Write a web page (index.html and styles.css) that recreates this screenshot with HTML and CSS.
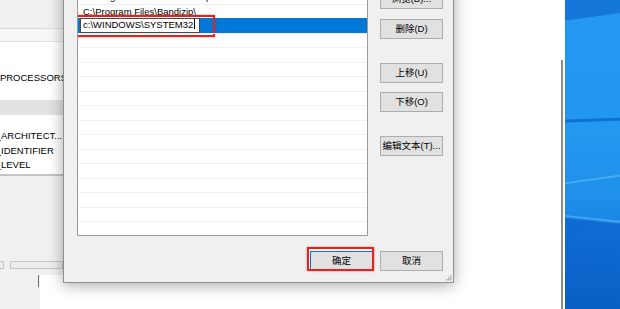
FILE: index.html
```html
<!DOCTYPE html>
<html lang="zh-CN">
<head>
    <meta charset="UTF-8">
    <meta name="viewport" content="width=device-width, initial-scale=1.0">
    <title>编辑环境变量</title>
    <link rel="stylesheet" href="styles.css">
</head>
<body>
    <div class="desk">
        <div class="wallpaper"></div>

        <div class="explorer">
            <div class="scroll-thumb"></div>
        </div>

        <div class="sysprop">
            <div class="sysprop-edge"></div>
        </div>

        <!-- environment variables window, mostly hidden behind the editor -->
        <div class="envwin">
            <div class="env-list">
                <div class="env-head"></div>
                <div class="env-row"><span class="env-name">ComSpec</span></div>
                <div class="env-row"><span class="env-name">DriverData</span></div>
                <div class="env-row"><span class="env-name">NUMBER_OF_PROCESSORS</span></div>
                <div class="env-row"><span class="env-name">OS</span></div>
                <div class="env-row selected"><span class="env-name">Path</span></div>
                <div class="env-row"><span class="env-name">PATHEXT</span></div>
                <div class="env-row"><span class="env-name">PROCESSOR_ARCHITECT...</span></div>
                <div class="env-row"><span class="env-name">PROCESSOR_IDENTIFIER</span></div>
                <div class="env-row"><span class="env-name">PROCESSOR_LEVEL</span></div>
            </div>
            <div class="env-btns">
                <div class="env-btn"></div>
                <div class="env-btn"></div>
            </div>
        </div>

        <!-- edit environment variable dialog -->
        <div class="dialog">
            <div class="dlg-body">
                <div class="path-list">
                    <div class="path-row">%SystemRoot%\system32</div>
                    <div class="path-row">%SystemRoot%</div>
                    <div class="path-row">%SystemRoot%\System32\Wbem</div>
                    <div class="path-row">%SYSTEMROOT%\System32\WindowsPowerShell\v1.0\</div>
                    <div class="path-row">C:\Program Files\NVIDIA Corporation\NVIDIA NvDLISR</div>
                    <div class="path-row">C:\Program Files\Bandizip\</div>
                    <div class="path-row editing">
                        <span class="edit-box">c:\WINDOWS\SYSTEM32<i class="caret"></i></span>
                        <span class="mark mark-edit"></span>
                    </div>
                    <div class="path-row"></div>
                    <div class="path-row"></div>
                    <div class="path-row"></div>
                    <div class="path-row"></div>
                    <div class="path-row"></div>
                    <div class="path-row"></div>
                    <div class="path-row"></div>
                    <div class="path-row"></div>
                    <div class="path-row"></div>
                    <div class="path-row"></div>
                    <div class="path-row"></div>
                    <div class="path-row"></div>
                    <div class="path-row"></div>
                    <div class="path-row"></div>
                    <div class="path-row"></div>
                </div>
                <div class="side-btns">
                    <button class="btn">新建(N)</button>
                    <button class="btn">编辑(E)</button>
                    <button class="btn">浏览(B)...</button>
                    <button class="btn">删除(D)</button>
                    <button class="btn sep">上移(U)</button>
                    <button class="btn near">下移(O)</button>
                    <button class="btn sep">编辑文本(T)...</button>
                </div>
            </div>
            <div class="dlg-foot">
                <button class="btn default">确定<span class="mark mark-ok"></span></button>
                <button class="btn">取消</button>
            </div>
            <svg class="grip" width="7" height="7" viewBox="0 0 7 7">
                <rect x="5" y="1" width="1.5" height="1.5" fill="#a8a8a8"/>
                <rect x="3" y="3" width="1.5" height="1.5" fill="#a8a8a8"/>
                <rect x="5" y="3" width="1.5" height="1.5" fill="#a8a8a8"/>
                <rect x="1" y="5" width="1.5" height="1.5" fill="#a8a8a8"/>
                <rect x="3" y="5" width="1.5" height="1.5" fill="#a8a8a8"/>
                <rect x="5" y="5" width="1.5" height="1.5" fill="#a8a8a8"/>
            </svg>
        </div>
    </div>
</body>
</html>
```

FILE: styles.css
```css
body {
    margin: 0;
    background: #fff;
    font-family: "Liberation Sans", "Noto Sans CJK SC", sans-serif;
    font-size: 9.5px;
    color: #000;
}

.desk {
    position: relative;
    width: 620px;
    height: 309px;
    overflow: hidden;
}

/* windows desktop wallpaper on the right */
.wallpaper {
    position: absolute;
    left: 565px;
    top: 0;
    width: 55px;
    height: 309px;
    background:
        linear-gradient(172deg, #1677da 0 20px, transparent 21px),
        linear-gradient(178deg, transparent 0 119px, #0f6fd5 120px 122px, transparent 123px),
        linear-gradient(172deg, transparent 0 180px, #45aaf6 181px 182px, transparent 183px),
        linear-gradient(186deg, transparent 0 219px, #3fa4f2 220px 221px, #0f6cd3 223px, #0a5fc5 309px),
        linear-gradient(180deg, #2399f1 0, #2196ef 110px, #2399f0 130px, #1f8fea 200px, #1b87e6 220px);
}

.explorer {
    position: absolute;
    left: 300px;
    top: 0;
    width: 265px;
    height: 309px;
    background: #fff;
}

.scroll-thumb {
    position: absolute;
    right: 2px;
    top: 60px;
    width: 2px;
    height: 260px;
    background: #8c8c8c;
}

.sysprop {
    position: absolute;
    left: -100px;
    top: 200px;
    width: 140px;
    height: 120px;
    background: #f0f0f0;
}

.sysprop-edge {
    position: absolute;
    left: 138px;
    top: 75px;
    width: 1px;
    height: 12px;
    background: #6e6e6e;
}

/* environment variables window */
.envwin {
    position: absolute;
    left: -150px;
    top: 0;
    width: 213px;
    height: 275px;
    background: #f0f0f0;
    overflow: hidden;
}

.env-list {
    margin: 28px 0 0 10px;
    width: 300px;
    background: #fff;
    border-top: 1px solid #dadada;
    border-bottom: 2px solid #c4c4c4;
    padding-bottom: 1px;
}

.env-head {
    height: 12px;
    background: #f7f7f7;
    border-bottom: 1px solid #e3e3e3;
}

.env-row {
    height: 14.5px;
    line-height: 14.5px;
    white-space: nowrap;
}

.env-row.selected {
    background: #e2e2e2;
}

.env-name {
    padding-left: 75px;
}

.env-btns {
    display: flex;
    gap: 6px;
    margin: 85px 0 0 100px;
}

.env-btn {
    width: 62px;
    height: 8px;
    box-sizing: border-box;
    border: 1px solid #c6c6c6;
    background: #ececec;
}

/* edit dialog */
.dialog {
    position: absolute;
    left: 63px;
    top: -84px;
    width: 391px;
    height: 367px;
    box-sizing: border-box;
    border: 1px solid #8f8f8f;
    background: #f0f0f0;
    box-shadow: 0 2px 14px rgba(0, 0, 0, 0.35);
    padding: 12px 10px 0 13px;
    display: flex;
    flex-direction: column;
}

.dlg-body {
    display: flex;
    gap: 12px;
}

.path-list {
    width: 291px;
    height: 307px;
    box-sizing: border-box;
    border: 1px solid #9a9a9a;
    background: #fff;
    padding-top: 1px;
    overflow: hidden;
}

.path-row {
    position: relative;
    height: 14.5px;
    box-sizing: border-box;
    border-top: 1px solid #f1f1f1;
    line-height: 13.5px;
    padding-left: 5px;
    white-space: nowrap;
}

.path-row.editing {
    background: #0078d7;
    border-top: 0;
    padding-left: 2px;
}

.edit-box {
    display: inline-block;
    width: 120px;
    height: 14.5px;
    box-sizing: border-box;
    border: 1px solid #4a4a4a;
    background: #fff;
    padding-left: 2px;
    line-height: 12.5px;
}

.caret {
    display: inline-block;
    width: 1px;
    height: 10px;
    margin-left: 1px;
    vertical-align: -1px;
    background: #000;
}

.mark {
    position: absolute;
    border: 2px solid #e8211c;
    box-shadow: 0 0 2px rgba(232, 33, 28, 0.5);
    pointer-events: none;
}

.mark-edit {
    left: -2px;
    top: -3px;
    width: 135px;
    height: 18px;
}

.side-btns {
    display: flex;
    flex-direction: column;
}

.btn {
    position: relative;
    width: 63px;
    height: 20px;
    box-sizing: border-box;
    border: 1px solid #adadad;
    background: #e1e1e1;
    font: inherit;
    color: #000;
    padding: 0;
    line-height: 18px;
    text-align: center;
    white-space: nowrap;
}

.side-btns .btn + .btn {
    margin-top: 10px;
}

.side-btns .btn.sep {
    margin-top: 24px;
}

.side-btns .btn.near {
    margin-top: 9px;
}

.dlg-foot {
    display: flex;
    justify-content: flex-end;
    gap: 7px;
    padding-top: 15px;
}

.btn.default {
    border-color: #0078d7;
}

.mark-ok {
    left: -4px;
    top: -5px;
    width: 63px;
    height: 20px;
}

.grip {
    position: absolute;
    right: 1px;
    bottom: 1px;
}
```
